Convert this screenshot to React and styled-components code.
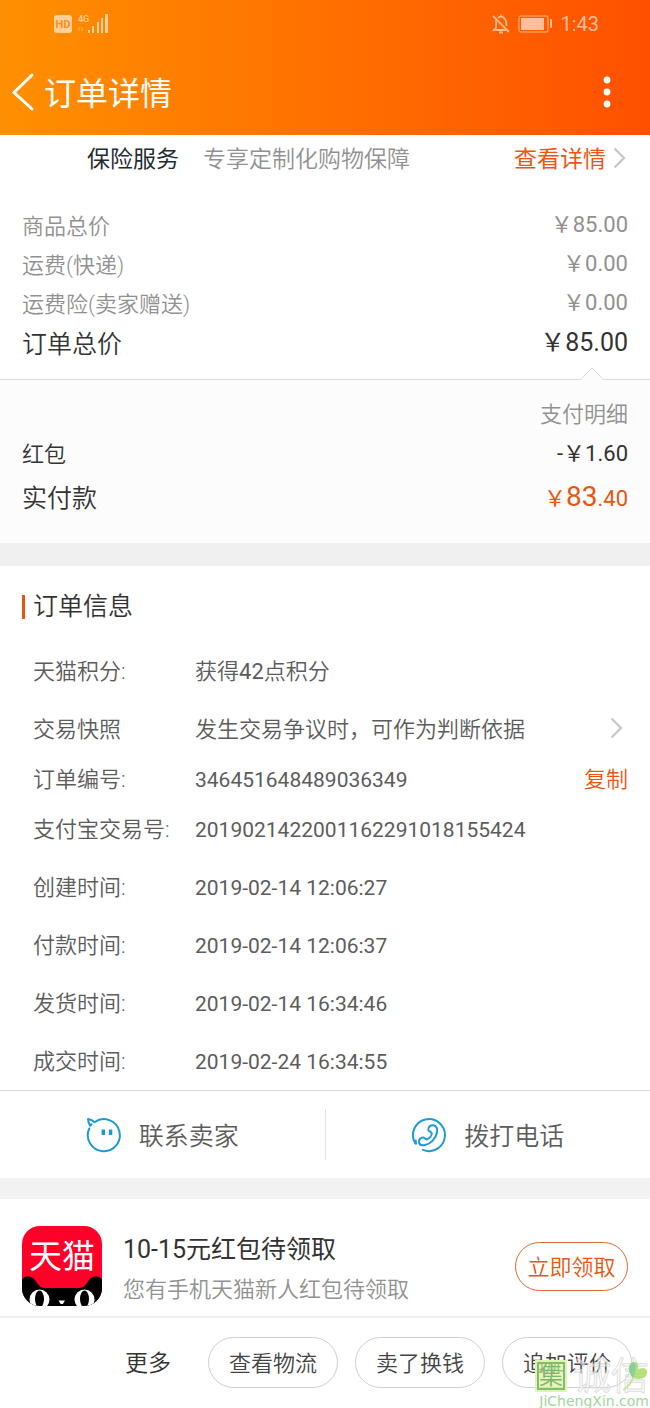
import styled, { createGlobalStyle } from 'styled-components';

const fees = [
  { label: '商品总价', price: '￥85.00' },
  { label: '运费(快递)', price: '￥0.00' },
  { label: '运费险(卖家赠送)', price: '￥0.00' },
];

const info = [
  { label: '天猫积分:', value: <>获得<b>42</b>点积分</> },
  { label: '交易快照', value: '发生交易争议时，可作为判断依据', arrow: true },
  { label: '订单编号:', value: '346451648489036349', copy: true, digits: true },
  { label: '支付宝交易号:', value: '2019021422001162291018155424', digits: true },
  { label: '创建时间:', value: '2019-02-14 12:06:27', digits: true },
  { label: '付款时间:', value: '2019-02-14 12:06:37', digits: true },
  { label: '发货时间:', value: '2019-02-14 16:34:46', digits: true },
  { label: '成交时间:', value: '2019-02-24 16:34:55', digits: true },
];

const Arrow = () => (
  <svg width="14" height="22" viewBox="0 0 14 22" fill="none" stroke="#c8c8c8" strokeWidth="2.400" aria-hidden="true">
    <path d="M1.500 1.500 L11 11 L1.500 20.500" />
  </svg>
);

const SignalIcon = () => (
  <svg width="56" height="22" viewBox="0 0 56 22" fill="#ffd09a" aria-hidden="true">
    <rect x="1" y="2" width="18" height="18" rx="3" />
    <text x="10" y="15" fontSize="11" fontWeight="700" textAnchor="middle" fill="#ff8c1a">HD</text>
    <text x="25" y="9" fontSize="9" fontWeight="500">4G</text>
    <path d="M26 18 v-4 l-1 2 M29 14 v4 l1 -2" fill="none" stroke="#ffb050" />
    <rect x="35" y="17" width="2" height="3" />
    <rect x="39" y="13" width="2" height="7" />
    <rect x="44" y="9" width="2" height="11" />
    <rect x="48" y="5" width="2" height="15" />
    <rect x="52" y="1" width="3" height="19" />
  </svg>
);

const MutedBell = () => (
  <svg width="18" height="20" viewBox="0 0 18 20" fill="none" stroke="#ffb98c" strokeWidth="1.800" aria-hidden="true">
    <path d="M4 6 V14 L2 16 H14 M6 4 Q9 1 12 4 Q14.500 6 14.500 12 M9 0.500 V3 M7 18.500 H11 M1 2 L17 18" />
  </svg>
);

const Battery = () => (
  <svg width="34" height="18" viewBox="0 0 34 18" aria-hidden="true">
    <rect x="1" y="1" width="29" height="16" rx="2" fill="none" stroke="#ff9c5c" strokeWidth="1.400" />
    <rect x="3" y="3" width="23" height="12" fill="#ffbe9c" />
    <rect x="32" y="4" width="2" height="9" fill="#ffb98c" />
  </svg>
);

const WangIcon = () => (
  <svg width="36" height="36" viewBox="0 0 36 36" fill="none" stroke="#1c9ad6" strokeWidth="2" strokeLinecap="round" strokeLinejoin="round" aria-hidden="true">
    <path d="M3.300 11.500 A16 16 0 1 0 8.500 5.200 Q6 2.500 2 2 Q2.200 6 4.200 8.800 L5.600 7.300" />
    <path d="M17.300 12.500 V18 M24.600 12.500 V18" strokeWidth="3.400" strokeLinecap="butt" />
  </svg>
);

const PhoneIcon = () => (
  <svg width="36" height="36" viewBox="0 0 36 36" fill="none" stroke="#1c9ad6" strokeWidth="2" strokeLinecap="round" strokeLinejoin="round" aria-hidden="true">
    <path d="M4.200 26.200 A16 16 0 1 1 12 32.900" />
    <path d="M5 26.800 L4.800 23.500" />
    <path d="M17.300 12.900 C17 9.500 20 7.800 22.500 8.300 C25.800 9 26.500 12.500 26 15.500 C25 21.500 19.500 27 14 28 C11 28.600 8.500 27.800 8 25.500 C7.500 23 9.500 20.300 12.300 20.600 C14.300 20.900 14 23 16 22.400 C18.800 21.300 21 18.500 20.700 16 C20.300 14.500 17.800 14.800 17.300 12.900 Z" />
  </svg>
);

const TmallLogo = () => (
  <svg width="80" height="80" viewBox="0 0 80 80" role="img" aria-label="天猫">
    <clipPath id="tile">
      <rect width="80" height="80" rx="18" />
    </clipPath>
    <g clipPath="url(#tile)">
      <rect width="80" height="80" fill="#ff0029" />
      <path d="M0 53 Q4 49 9 51 Q12 52 15 57 Q18 62 23 62 H57 Q62 62 65 57 Q68 52 71 51 Q76 49 80 53 V80 H0 Z" fill="#000" />
      <ellipse cx="17.500" cy="73.500" rx="10" ry="10" fill="#fff" />
      <ellipse cx="17.500" cy="73" rx="4.500" ry="8.500" fill="#000" />
      <ellipse cx="62.500" cy="73.500" rx="10" ry="10" fill="#fff" />
      <ellipse cx="62.500" cy="73" rx="4.500" ry="8.500" fill="#000" />
      <path d="M36.500 74.500 H43 L40.800 78 H38.700 Z" fill="#fff" />
    </g>
    <text x="40" y="42" fontSize="33" fontWeight="400" textAnchor="middle" fill="#fff">天猫</text>
  </svg>
);

const Leaf = () => (
  <svg width="26" height="30" viewBox="0 0 26 30" aria-hidden="true">
    <path d="M10 17 C3 8 6 2 11 1 C16 1 16 6 15 9 C19 6 25 7 24 12 C23 18 16 19 10 17 Z" fill="#b5e07a" />
    <path d="M10 17 C3 8 6 2 11 1 C14 4 13 11 10 17 Z" fill="#8ccf96" />
    <path d="M10 17 Q7 25 0 29" fill="none" stroke="#c3e69a" strokeWidth="2" />
  </svg>
);

const App = () => {
  return (
    <Page>
      <GlobalStyle />
      <Header>
        <StatusBar>
          <SignalIcon />
          <StatusRight>
            <MutedBell />
            <Battery />
            <span>1:43</span>
          </StatusRight>
        </StatusBar>
        <TitleBar>
          <IconButton aria-label="返回">
            <svg width="24" height="40" viewBox="0 0 24 40" fill="none" stroke="#fff" strokeWidth="3" strokeLinecap="round">
              <path d="M21 3 L3 20.500 L21 37" />
            </svg>
          </IconButton>
          <h1>订单详情</h1>
          <IconButton aria-label="菜单">
            <svg width="8" height="34" viewBox="0 0 8 34" fill="#fff">
              <circle cx="4" cy="5" r="3.400" />
              <circle cx="4" cy="17" r="3.400" />
              <circle cx="4" cy="29" r="3.400" />
            </svg>
          </IconButton>
        </TitleBar>
      </Header>

      <Insurance>
        <strong>保险服务</strong>
        <span>专享定制化购物保障</span>
        <a href="#insurance">
          查看详情
          <Arrow />
        </a>
      </Insurance>

      <Fees>
        {fees.map((fee) => (
          <FeeRow key={fee.label}>
            <dt>{fee.label}</dt>
            <dd>{fee.price}</dd>
          </FeeRow>
        ))}
        <FeeRow $total>
          <dt>订单总价</dt>
          <dd>￥85.00</dd>
        </FeeRow>
      </Fees>

      <Payment>
        <Notch width="24" height="13" viewBox="0 0 24 13" aria-hidden="true">
          <path d="M0 13 L12 1 L24 13" fill="#fcfcfc" stroke="#dcdcdc" />
        </Notch>
        <PayHint>支付明细</PayHint>
        <dl>
          <PayRow>
            <dt>红包</dt>
            <dd>-￥1.60</dd>
          </PayRow>
          <PayRow $final>
            <dt>实付款</dt>
            <dd>￥<big>83</big>.40</dd>
          </PayRow>
        </dl>
      </Payment>

      <OrderInfo>
        <h2>订单信息</h2>
        <dl>
          {info.map((row) => (
            <InfoRow key={row.label} $short={row.copy} $digits={row.digits}>
              <dt>{row.label}</dt>
              <dd>{row.value}</dd>
              {row.arrow && <Arrow />}
              {row.copy && <CopyButton>复制</CopyButton>}
            </InfoRow>
          ))}
        </dl>
      </OrderInfo>

      <Contact>
        <ContactButton>
          <WangIcon />
          <span>联系卖家</span>
        </ContactButton>
        <ContactButton>
          <PhoneIcon />
          <span>拨打电话</span>
        </ContactButton>
      </Contact>

      <Promo>
        <TmallLogo />
        <PromoText>
          <h3>10-15元红包待领取</h3>
          <p>您有手机天猫新人红包待领取</p>
        </PromoText>
        <PillButton $accent>立即领取</PillButton>
      </Promo>

      <BottomBar>
        <MoreButton>更多</MoreButton>
        <PillButton>查看物流</PillButton>
        <PillButton>卖了换钱</PillButton>
        <PillButton>追加评价</PillButton>
        <Watermark>
          <WatermarkLogo>
            <Seal>集</Seal>
            <Outlined>诚信</Outlined>
            <Leaf />
          </WatermarkLogo>
          <small>JiChengXin.com</small>
        </Watermark>
      </BottomBar>
    </Page>
  );
};

export default App;

const GlobalStyle = createGlobalStyle`
  * {
    box-sizing: border-box;
  }

  body {
    margin: 0;
    background: #fff;
    font-family: Roboto, 'Noto Sans CJK SC', sans-serif;
    font-weight: 350;
  }

  h1, h2, h3, p, dl, dt, dd {
    margin: 0;
    font-weight: inherit;
  }

  button {
    padding: 0;
    border: 0;
    background: none;
    font: inherit;
    color: inherit;
    cursor: pointer;
  }

  a {
    text-decoration: none;
  }

  svg {
    display: block;
    flex: none;
  }
`;

const Page = styled.div`
  color: #333;
  font-size: 22px;
  line-height: 30px;
`;

const Header = styled.header`
  background: linear-gradient(to right, #ff9000, #ff5000);
  color: #fff;
  font-weight: 400;
`;

const StatusBar = styled.div`
  display: flex;
  align-items: center;
  justify-content: space-between;
  height: 48px;
  padding: 0 51px 0 53px;
`;

const StatusRight = styled.div`
  display: flex;
  align-items: center;
  gap: 8px;
  color: #ffbe9c;
  font-size: 20px;
`;

const TitleBar = styled.div`
  display: flex;
  align-items: center;
  height: 87px;
  padding: 0 39px 0 11px;

  h1 {
    flex: 1;
    margin-left: 9px;
    padding-top: 4px;
    font-size: 32px;
    line-height: 40px;
  }
`;

const IconButton = styled.button`
  flex: none;
`;

const Insurance = styled.section`
  display: flex;
  align-items: center;
  height: 48px;
  padding: 2px 23px 0 87px;
  font-size: 23px;

  strong {
    font-weight: 400;
    color: #1f2d33;
  }

  span {
    margin-left: 24px;
    color: #919191;
  }

  a {
    display: flex;
    align-items: center;
    gap: 7px;
    margin-left: auto;
    color: #ee5511;
    font-weight: 400;
  }

  svg {
    margin-bottom: 4px;
  }
`;

const Fees = styled.dl`
  padding: 23px 22px 14px;
`;

const FeeRow = styled.div`
  display: flex;
  align-items: center;
  justify-content: space-between;
  height: ${(props) => (props.$total ? '42px' : '39px')};
  color: ${(props) => (props.$total ? '#333' : '#919191')};
  font-size: ${(props) => (props.$total ? '25px' : '22px')};

  dt {
    padding-top: 2px;
  }

  dd {
    padding-bottom: 2px;
    font-weight: 400;
  }
`;

const Payment = styled.section`
  position: relative;
  padding: 14px 22px 20px;
  background: #fcfcfc;
  border-top: 1px solid #dcdcdc;
  border-bottom: 23px solid #f0f0f0;
`;

const Notch = styled.svg`
  position: absolute;
  top: -13px;
  right: 46px;
`;

const PayHint = styled.p`
  height: 40px;
  line-height: 42px;
  text-align: right;
  color: #919191;
`;

const PayRow = styled.div`
  display: flex;
  align-items: center;
  justify-content: space-between;
  height: ${(props) => (props.$final ? '50px' : '39px')};

  dt {
    padding-top: 2px;
    font-size: ${(props) => (props.$final ? '25px' : '22px')};
  }

  dd {
    color: ${(props) => (props.$final ? '#e8560f' : '#333')};
    font-weight: 400;
  }

  big {
    font-size: 28px;
  }
`;

const OrderInfo = styled.section`
  padding: 26px 22px 0;

  h2 {
    display: flex;
    align-items: center;
    gap: 8px;
    margin-bottom: 20px;
    font-size: 25px;
    line-height: 30px;
  }

  h2::before {
    content: '';
    width: 3px;
    height: 24px;
    background: #e8560f;
  }
`;

const InfoRow = styled.div`
  display: grid;
  grid-template-columns: 162px 1fr auto;
  align-items: center;
  height: ${(props) => (props.$short ? '42px' : '58px')};
  padding: 2px 0 0 11px;
  color: #5c5c5c;

  dd {
    font-size: ${(props) => (props.$digits ? '21px' : '22px')};
    font-weight: ${(props) => (props.$digits ? 400 : 'inherit')};
  }

  b {
    font-weight: 400;
  }

  svg {
    margin: 0 4px 4px 0;
  }
`;

const CopyButton = styled.button`
  color: #e8560f;
`;

const Contact = styled.section`
  display: flex;
  padding: 18px 0;
  border-top: 1px solid #d8d8d8;
  border-bottom: 21px solid #f2f2f2;
`;

const ContactButton = styled.button`
  display: flex;
  flex: 1;
  align-items: center;
  justify-content: center;
  gap: 17px;
  height: 51px;
  color: #5c5c5c;
  font-size: 25px;

  span {
    padding-top: 4px;
  }

  & + & {
    border-left: 1px solid #e2e2e2;
  }
`;

const Promo = styled.section`
  display: flex;
  align-items: center;
  padding: 27px 22px 10px;
  border-bottom: 2px solid #f0f0f0;
`;

const PromoText = styled.div`
  flex: 1;
  margin-left: 21px;
  padding-top: 4px;

  h3 {
    font-size: 25px;
    font-weight: 400;
    line-height: 40px;
  }

  p {
    padding-top: 4px;
    line-height: 32px;
    color: #919191;
  }
`;

const PillButton = styled.button`
  width: ${(props) => (props.$accent ? '113px' : '130px')};
  height: ${(props) => (props.$accent ? '49px' : '51px')};
  padding-top: 3px;
  border: 1px solid ${(props) => (props.$accent ? '#d9692f' : '#cfcfcf')};
  border-radius: 26px;
  color: ${(props) => (props.$accent ? '#e8560f' : '#444')};
`;

const BottomBar = styled.footer`
  position: relative;
  display: flex;
  align-items: center;
  justify-content: flex-end;
  gap: 17px;
  padding: 19px 18px 21px;
`;

const MoreButton = styled.button`
  margin-right: 20px;
  padding-top: 3px;
  font-size: 23px;
`;

const Watermark = styled.div`
  position: absolute;
  right: 1px;
  bottom: 0;
  display: flex;
  flex-direction: column;
  align-items: flex-end;
  pointer-events: none;

  small {
    font-family: 'DejaVu Sans', sans-serif;
    font-size: 14px;
    font-weight: 400;
    line-height: 16px;
    color: #a3d69c;
  }
`;

const WatermarkLogo = styled.div`
  display: flex;
  align-items: center;

  svg {
    margin-left: -26px;
  }
`;

const Seal = styled.span`
  width: 32px;
  height: 32px;
  border: 2px solid #dff5ae;
  outline: 2px solid #86b877;
  outline-offset: -4px;
  background: rgba(213, 243, 150, 0.7);
  color: #7fb374;
  font-size: 24px;
  line-height: 28px;
  text-align: center;
`;

const Outlined = styled.span`
  margin-left: 6px;
  color: rgba(255, 255, 255, 0.5);
  font-size: 38px;
  line-height: 34px;
  -webkit-text-stroke: 1px rgba(205, 205, 205, 0.7);
`;
